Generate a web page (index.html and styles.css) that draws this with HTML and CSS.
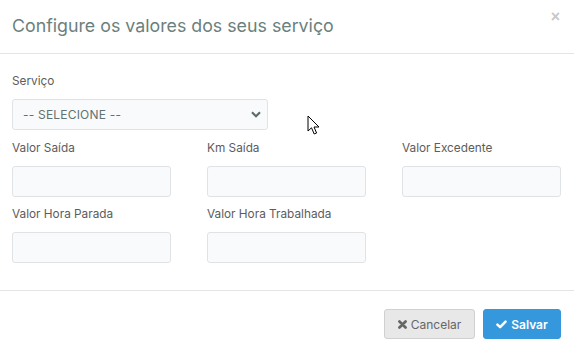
FILE: index.html
```html
<!DOCTYPE html>
<html lang="pt-BR">
<head>
  <meta charset="UTF-8" />
  <title>Configurar serviço</title>
  <link rel="stylesheet" href="styles.css">
</head>
<body>
  <div class="modal">
    <div class="modal-header">
      <h4 class="modal-title">Configure os valores dos seus serviço</h4>
      <button class="close" type="button">&times;</button>
    </div>

    <div class="modal-body">
      <div class="field field-select">
        <label>Serviço</label>
        <div class="select-wrap">
          <select class="control">
            <option>-- SELECIONE --</option>
          </select>
          <svg class="chevron" width="10" height="7" viewBox="0 0 10 7"><path d="M1 1.2 L5 5.2 L9 1.2" fill="none" stroke="#5d6b6a" stroke-width="2.2"/></svg>
        </div>
      </div>

      <div class="grid">
        <div class="field"><label>Valor Saída</label><input class="control" type="text"></div>
        <div class="field"><label>Km Saída</label><input class="control" type="text"></div>
        <div class="field"><label>Valor Excedente</label><input class="control" type="text"></div>
        <div class="field"><label>Valor Hora Parada</label><input class="control" type="text"></div>
        <div class="field"><label>Valor Hora Trabalhada</label><input class="control" type="text"></div>
      </div>
    </div>

    <div class="modal-footer">
      <button class="btn btn-default" type="button">
        <svg width="9" height="9" viewBox="0 0 10 10"><path d="M1.6 1.6 L8.4 8.4 M8.4 1.6 L1.6 8.4" stroke="#666" stroke-width="3" stroke-linecap="round"/></svg>
        Cancelar
      </button>
      <button class="btn btn-primary" type="button">
        <svg width="11" height="9" viewBox="0 0 12 10"><path d="M1.5 5.2 L4.5 8 L10.5 1.8" fill="none" stroke="#fff" stroke-width="2.8" stroke-linecap="round" stroke-linejoin="round"/></svg>
        Salvar
      </button>
    </div>

    <svg class="cursor" width="14" height="21" viewBox="0 0 14 21"><path d="M1 1 L1 16 L4.5 12.8 L7.2 19 L9.6 18 L7 12 L12 12 Z" fill="#fff" stroke="#000" stroke-width="1" stroke-linejoin="round"/></svg>
  </div>
</body>
</html>
```

FILE: styles.css
```css
* { margin: 0; padding: 0; box-sizing: border-box; }
html, body { background: #fff; font-family: Inter, "Noto Sans", sans-serif; }

.modal { position: relative; width: 574px; height: 346px; overflow: hidden; }

.modal-header {
  height: 54px; padding: 0 12px; display: flex; align-items: center; justify-content: space-between;
  border-bottom: 1px solid #e5e5e5;
}
.modal-title { font-size: 17.8px; font-weight: 400; color: #6b7f7e; margin-top: -2px; }
.close {
  border: none; background: none; font-size: 16px; font-weight: bold; color: #c8c8c8;
  line-height: 1; margin-top: -20px; margin-right: 2px; cursor: pointer; font-family: Arial, sans-serif;
}

.modal-body { padding: 18px 13px 27px 12px; }

.field label {
  display: block; font-size: 11.8px; line-height: 18px; color: #5c5c5c; margin-bottom: 9px;
}
.field-select { margin-bottom: 9px; }

.control {
  display: block; width: 100%; height: 31px; border: 1px solid #dfe3e6; border-radius: 3px;
  background: #f9fafb; font-family: inherit; font-size: 12px; color: #607372; outline: none;
}

.select-wrap { position: relative; width: 256px; }
.select-wrap select { appearance: none; padding: 0 10px; letter-spacing: 0.2px; }
.chevron { position: absolute; right: 7px; top: 12px; pointer-events: none; }

.grid { display: grid; grid-template-columns: repeat(3, 159px); column-gap: 36px; row-gap: 8px; }

.modal-footer {
  border-top: 1px solid #e5e5e5; padding: 18px 13px 0; display: flex; justify-content: flex-end; gap: 8px;
}

.btn {
  height: 30px; border-radius: 3px; font-family: inherit; font-size: 12px; display: flex;
  align-items: center; gap: 4px; cursor: pointer;
}
.btn-default { width: 91px; padding: 0 12px; background: #e8e8e8; border: 1px solid #d0d0d0; color: #666; justify-content: center; }
.btn-primary { width: 78px; padding: 0 10px; background: #3598dc; border: 1px solid #3598dc; color: #fff; font-weight: 600; justify-content: center; }

.cursor { position: absolute; left: 307px; top: 115px; }
```
